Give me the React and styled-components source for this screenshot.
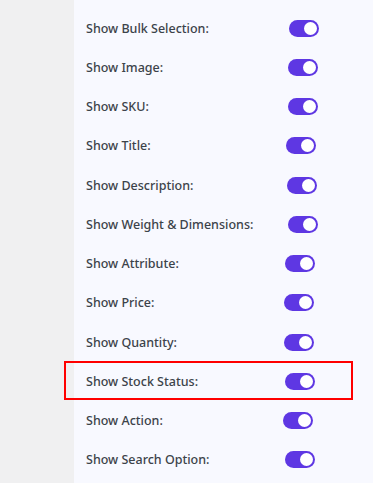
import styled, { createGlobalStyle } from "styled-components";

const GlobalStyle = createGlobalStyle`
  html, body {
    margin: 0;
    padding: 0;
    background: #f8f9ff;
  }
  body {
    font-family: "Noto Sans", "Open Sans", sans-serif;
  }
`;

const options = [
  { label: "Show Bulk Selection:", shift: 5 },
  { label: "Show Image:", shift: 4 },
  { label: "Show SKU:", shift: 4 },
  { label: "Show Title:", shift: 2 },
  { label: "Show Description:", shift: 3 },
  { label: "Show Weight & Dimensions:", shift: 4 },
  { label: "Show Attribute:", shift: 1 },
  { label: "Show Price:", shift: 0 },
  { label: "Show Quantity:", shift: 0 },
  { label: "Show Stock Status:", shift: 1, highlight: true },
  { label: "Show Action:", shift: -1 },
  { label: "Show Search Option:", shift: 1 },
];

export default function App() {
  return (
    <>
      <GlobalStyle />
      <Page>
        <Sidebar />
        <Panel>
          {options.map((opt) => (
            <Row key={opt.label} highlight={opt.highlight}>
              <Label>{opt.label}</Label>
              <Toggle shift={opt.shift}>
                <Knob />
              </Toggle>
            </Row>
          ))}
        </Panel>
      </Page>
    </>
  );
}

const Page = styled.div`
  display: flex;
  width: 373px;
  height: 483px;
  overflow: hidden;
`;

const Sidebar = styled.div`
  width: 74px;
  flex-shrink: 0;
  background: #f0f0f1;
`;

const Panel = styled.div`
  flex: 1;
  background: #f8f9ff;
  padding: 8.4px 0 0 12px;
  display: flex;
  flex-direction: column;
`;

const Row = styled.div`
  position: relative;
  display: flex;
  align-items: center;
  height: 39.27px;
  flex-shrink: 0;

  &::after {
    content: "";
    display: ${(p) => (p.highlight ? "block" : "none")};
    position: absolute;
    left: -22px;
    top: -1px;
    width: 289px;
    height: 39px;
    border: 2px solid #f00;
    box-sizing: border-box;
  }
`;

const Label = styled.span`
  width: 198px;
  flex-shrink: 0;
  font-size: 12.5px;
  font-weight: 500;
  color: #3c434a;
`;

const Toggle = styled.span`
  display: flex;
  align-items: center;
  justify-content: flex-end;
  margin-left: ${(p) => p.shift}px;
  width: 30px;
  height: 17px;
  border-radius: 9px;
  background: #5e37e3;
  padding: 0 2px;
  box-sizing: border-box;
`;

const Knob = styled.span`
  width: 13px;
  height: 13px;
  border-radius: 50%;
  background: #fff;
`;
